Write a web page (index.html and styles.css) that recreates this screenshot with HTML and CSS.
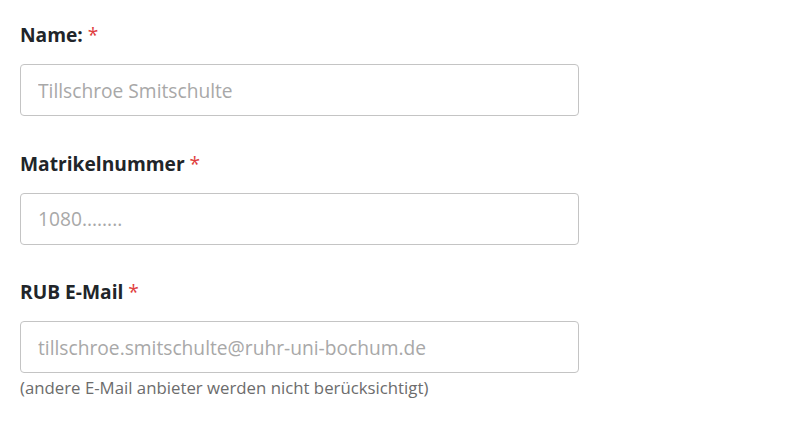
FILE: index.html
```html
<!DOCTYPE html>
<html lang="de">
<head>
<meta charset="utf-8">
<link rel="stylesheet" href="styles.css">
</head>
<body>
<form class="form">
  <div class="group">
    <label class="label">Name: <span class="req">*</span></label>
    <input class="input" type="text" placeholder="Tillschroe Smitschulte">
  </div>
  <div class="group">
    <label class="label">Matrikelnummer <span class="req">*</span></label>
    <input class="input" type="text" placeholder="1080........">
  </div>
  <div class="group">
    <label class="label">RUB E-Mail <span class="req">*</span></label>
    <input class="input" type="text" placeholder="tillschroe.smitschulte@ruhr-uni-bochum.de">
    <div class="hint">(andere E-Mail anbieter werden nicht berücksichtigt)</div>
  </div>
</form>
</body>
</html>
```
FILE: styles.css
```css
* { box-sizing: border-box; }
html, body { margin: 0; background: #fff; }
body {
  font-family: "Open Sans", "Liberation Sans", sans-serif;
  color: #212529;
  padding: 20px 20px 0;
}
.form { width: 559px; display: flex; flex-direction: column; gap: 32.5px; }
.group { display: flex; flex-direction: column; }
.label {
  font-size: 19.2px;
  font-weight: 700;
  line-height: 29px;
  margin-bottom: 15px;
}
.req { color: #e03e3e; font-weight: 400; }
.input {
  height: 52px;
  width: 100%;
  border: 1px solid #c4c4c4;
  border-radius: 4px;
  padding: 0 17px;
  font-family: inherit;
  font-size: 19.2px;
  color: #333;
  background: #fff;
  outline: none;
}
.input::placeholder { color: #a8a8a8; opacity: 1; }
.hint {
  font-size: 16.8px;
  line-height: 24px;
  color: #6c6c6c;
  margin-top: 3px;
}
```
